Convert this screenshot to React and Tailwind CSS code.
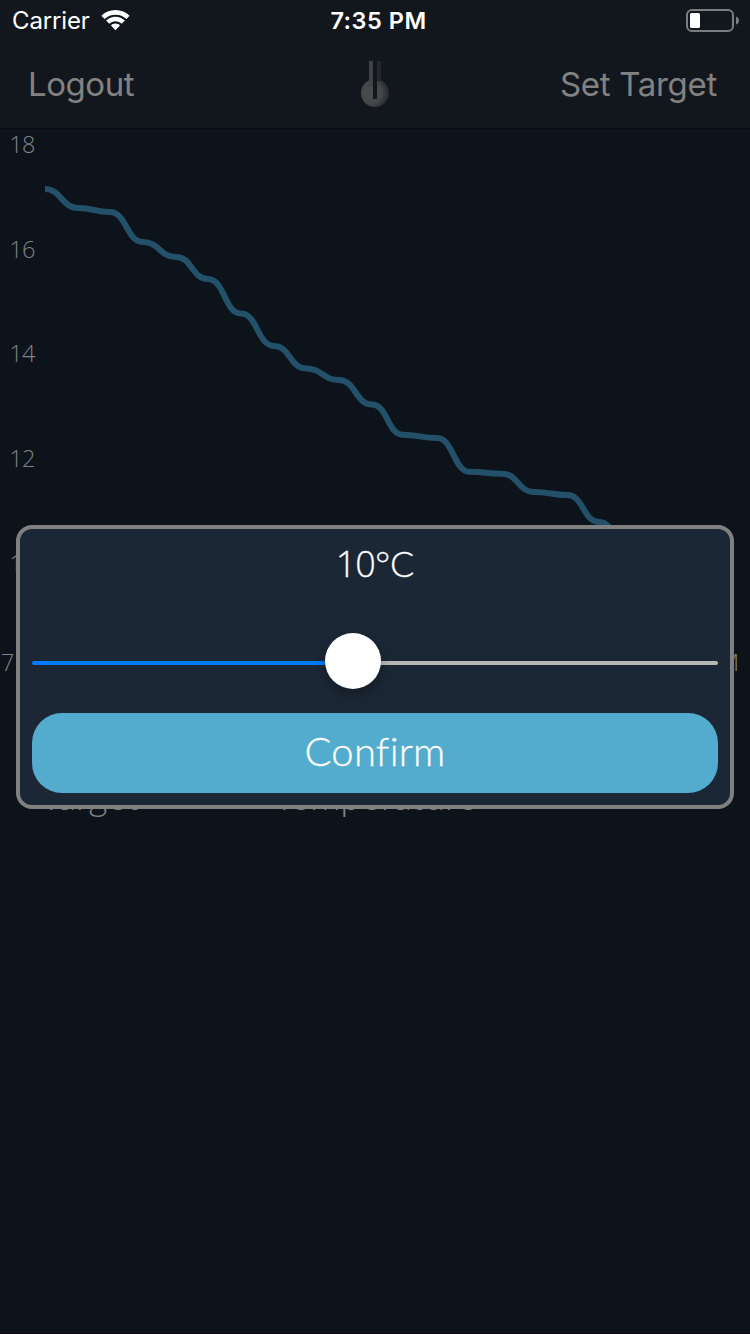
const points = [
  [45, 189], [78, 208], [110, 212], [143, 242], [176, 257], [208, 279], [241, 313.5],
  [274, 346], [306, 368.5], [339, 380], [372, 404.5], [403, 434.8], [437, 438], [470, 471.8],
  [502, 473.7], [534, 492], [567.5, 495], [599, 522], [631, 550],
];

const curve = points
  .map(([x, y], i) => {
    if (i === 0) return `M${x} ${y - 128}`;
    const [px, py] = points[i - 1];
    const mid = (px + x) / 2;
    return `C${mid} ${py - 128} ${mid} ${y - 128} ${x} ${y - 128}`;
  })
  .join(' ');

function StatusBar() {
  return (
    <div className="flex h-10 items-center justify-between pl-3 pr-[11px] text-white">
      <div className="flex w-[200px] items-center gap-[11px]">
        <span className="mt-px w-[78px] whitespace-nowrap text-[24px] leading-10 tracking-[-0.15px]">Carrier</span>
        <svg className="h-[21px] w-[29px]" viewBox="0 0 29 21" fill="currentColor">
          <path d="M14.5 0C20 0 25 2.1 28.6 5.7L25.4 8.9C22.4 6.2 18.8 4.7 14.5 4.7S6.6 6.2 3.6 8.9L.4 5.7C4 2.1 9 0 14.5 0Z" />
          <path d="M14.5 6.8C18 6.8 21.2 8.2 23.9 10.5L20.7 13.8C19 12.3 16.9 11.3 14.5 11.3S10 12.3 8.3 13.8L5.1 10.5C7.8 8.2 11 6.8 14.5 6.8Z" />
          <path d="M14.5 13.6C16.3 13.6 17.8 14.3 19 15.5L14.5 20.3L10 15.5C11.2 14.3 12.7 13.6 14.5 13.6Z" />
        </svg>
      </div>
      <span className="mt-px pl-[6px] text-[23.5px] font-semibold leading-10 tracking-[0.5px]">7:35 PM</span>
      <div className="flex w-[200px] justify-end">
        <svg className="h-6 w-[54px]" viewBox="0 0 54 24">
          <rect x="2" y="2" width="46" height="21" rx="5" fill="none" stroke="#7b7e81" strokeWidth="2" />
          <rect x="5" y="5" width="10" height="15" rx="1.5" fill="#fff" />
          <path d="M51 8.5Q54 9.5 54 12.5T51 16.5Z" fill="#7b7e81" />
        </svg>
      </div>
    </div>
  );
}

function Thermometer() {
  return (
    <svg className="ml-[5px] mt-5 h-[47px] w-7" viewBox="0 0 28 47">
      <defs>
        <radialGradient id="bulb" cx="0.35" cy="0.5" r="0.65">
          <stop offset="0" stopColor="#4a4b4d" />
          <stop offset="0.6" stopColor="#454648" />
          <stop offset="1" stopColor="#25282c" />
        </radialGradient>
      </defs>
      <circle cx="14" cy="33" r="14" fill="url(#bulb)" />
      <path d="M8 1H12V26H8Z" fill="#414244" />
      <path d="M16 1H20V21H16Z" fill="#242629" />
      <path d="M12 1H16V39H12Z" fill="#12171e" />
    </svg>
  );
}

function NavBar() {
  return (
    <div className="flex h-[89px] items-start justify-between border-b border-[#080c13] pl-7 pr-[33px] text-[33px] leading-[88px] text-[#828282]">
      <span className="w-[200px] tracking-[-0.45px]">Logout</span>
      <Thermometer />
      <span className="w-[200px] whitespace-nowrap text-right tracking-[-0.3px]">Set Target</span>
    </div>
  );
}

function Chart() {
  return (
    <div className="relative h-[548px] font-['Open_Sans','Lato',sans-serif] text-[23.5px] font-light text-[#808386]">
      <svg className="absolute -top-px left-0 h-[548px] w-[750px]" viewBox="0 0 750 548">
        <path d={curve} fill="none" stroke="#235169" strokeWidth="6" />
      </svg>
      <div className="flex w-[34.5px] flex-col items-end gap-[64.7px] leading-10 tracking-[-0.8px]">
        <span className="-mt-[5px]">18</span>
        <span>16</span>
        <span>14</span>
        <span>12</span>
        <span>10</span>
      </div>
      <div className="mt-[59px] flex justify-between pl-px pr-[11px] leading-10">
        <span>7:34 PM</span>
        <span>7:35 PM</span>
      </div>
    </div>
  );
}

function Readings() {
  return (
    <div className="mt-[94px] grid grid-cols-[180px_390px_180px] text-center font-['Lato'] text-[38px] font-light leading-[48px] tracking-[-0.2px] text-[#808386]">
      <span>Target</span>
      <span>Temperature</span>
    </div>
  );
}

function TargetDialog() {
  return (
    <div className="absolute left-4 top-[525px] flex h-[284px] w-[718px] flex-col rounded-2xl border-4 border-[#808080] bg-[#1b2735] px-3 pb-3 font-['Lato'] font-light text-white">
      <div className="flex h-[61px] items-center justify-center pt-[11px] text-[36px] leading-[50px] [-webkit-text-stroke:0.3px_white]">
        <span className="-mt-[2px] font-['Open_Sans'] tracking-[-0.8px]">10</span>
        <span className="-mt-[5px]">°C</span>
      </div>
      <div className="relative mt-[43px] flex h-[56px] items-center pt-[3px]">
        <div className="h-1 w-[320px] rounded-l-full bg-[#007aff]" />
        <div className="h-1 flex-1 rounded-r-full bg-[#b6b6b6]" />
        <div className="absolute left-[293px] top-0 size-[56px] rounded-full bg-white shadow-[0_5px_12px_rgba(0,0,0,0.3)]" />
      </div>
      <button className="mt-auto h-20 w-full rounded-[30px] bg-[#53abcd] pb-[4px] text-[40px] leading-[76px] tracking-[0.2px] [-webkit-text-stroke:0.3px_white] [font-variant-ligatures:none]">Confirm</button>
    </div>
  );
}

export default function App() {
  return (
    <div className="relative h-[1334px] w-[750px] overflow-hidden border-b border-[#0a0611] bg-[#0c131a] font-['Inter',sans-serif]">
      <div className="bg-[#12171e]">
        <StatusBar />
        <NavBar />
      </div>
      <Chart />
      <Readings />
      <TargetDialog />
    </div>
  );
}
